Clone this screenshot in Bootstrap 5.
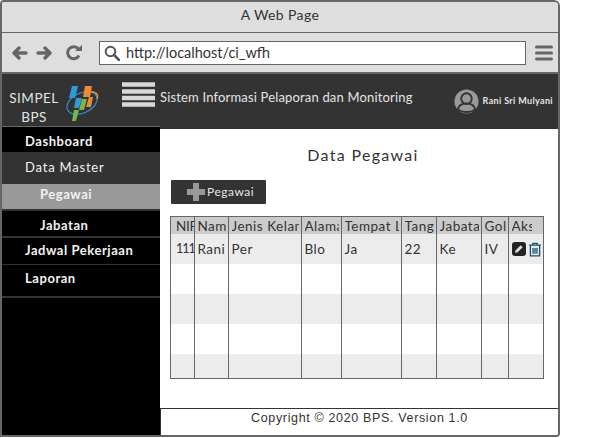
<!DOCTYPE html>
<html lang="en">
<head>
    <meta charset="UTF-8" />
    <meta name="viewport" content="width=device-width, initial-scale=1.0" />
    <title>A Web Page</title>
    <link href="https://cdn.jsdelivr.net/npm/bootstrap@5.3.0/dist/css/bootstrap.min.css" rel="stylesheet">
    <style>
        body { background: #fff; font-family: "Lato", "Liberation Sans", sans-serif; color: #333; overflow: hidden; }
        .browser-win { width: 560px; height: 437px; border: 2px solid #666; border-radius: 4px 6px 4px 0; overflow: hidden; }
        .title-bar { height: 31px; flex: none; background: #dedede; border-bottom: 1px solid #666; font-size: 14px; letter-spacing: .4px; padding-bottom: 5px; }
        .tool-bar { height: 41px; flex: none; background: #dedede; border-bottom: 2px solid #666; padding: 0 0 0 9px; }
        .nav-fwd { margin-left: 8px; }
        .nav-reload { margin-left: 13px; }
        .url-box { width: 427px; height: 24px; background: #fff; border: 1px solid #666; margin: 0 9px 0 17px; font-size: 14.5px; letter-spacing: 0; padding-left: 4px; gap: 6px; }
        .app-head { height: 52px; flex: none; background: #333; color: #e4e4e4; }
        .brand-text { width: 64px; font-size: 13.5px; line-height: 19px; text-align: center; padding-top: 15px; letter-spacing: .5px; }
        .brand-logo { margin-top: 12px; flex: none; }
        .head-menu { margin-left: 22px; height: 41px; }
        .head-title { font-size: 13px; letter-spacing: .17px; margin-left: 5px; margin-top: 7px; white-space: nowrap; }
        .head-user { height: 54px; padding-right: 5px; }
        .user-name { font-size: 9px; font-weight: 700; letter-spacing: .35px; margin-left: 4px; white-space: nowrap; }
        .app-body { height: 309px; }
        .side-menu { width: 158px; background: #000; flex: none; border-top: 1px solid #666; }
        .side-item { display: block; color: #f2f2f2; font-size: 13px; letter-spacing: .55px; text-decoration: none; padding-left: 23px; font-weight: 700; }
        .side-item:hover { color: #f2f2f2; }
        .si-dash { height: 25px; line-height: 29px; }
        .si-master { height: 32px; line-height: 30px; background: #333; font-weight: 400; letter-spacing: .8px; }
        .si-sub { padding-left: 38px; }
        .si-peg { height: 25px; line-height: 21px; background: #999; }
        .si-gap { height: 2px; background: #333; }
        .si-jab { height: 27px; line-height: 29px; border-bottom: 2px solid #333; }
        .si-jad { height: 27px; line-height: 24px; border-bottom: 1px solid #333; }
        .si-lap { height: 33px; line-height: 26px; border-bottom: 2px solid #333; }
        .main-pane { width: 398px; background: #fff; border-top: 3px solid #333; }
        .page-title { font-size: 16px; letter-spacing: 1.3px; text-align: center; margin: 15px 0 0 0; height: 36px; font-weight: 400; line-height: 22px; padding-left: 8px; }
        .add-btn { width: 95px; height: 24px; flex: none; margin-left: 11px; background: #333; color: #e6e6e6; font-size: 12px; letter-spacing: .5px; border: 0; border-radius: 1px; padding: 0 0 0 15px; gap: 1px; }
        .add-btn:hover { background: #333; color: #e6e6e6; }
        .data-wrap { margin: 12px 0 0 10px; width: 374px; height: 163px; flex: none; border: 1px solid #666; overflow: hidden; }
        .data-tbl { width: 372px; table-layout: fixed; border-collapse: collapse; font-size: 13.5px; letter-spacing: .5px; margin: 0; }
        .data-tbl th, .data-tbl td { border-right: 1px solid #666; padding: 1px 2px 0 3px; white-space: nowrap; font-weight: 400; color: #333; }
        .data-tbl th:first-child, .data-tbl td:first-child { padding-left: 5px; padding-right: 0; letter-spacing: -.3px; }
        .data-tbl td:first-child { font-size: 12.5px; letter-spacing: -1px; }
        .data-tbl th:last-child { border-right: 0; padding-right: 11px; }
        .data-tbl td:last-child { border-right: 0; padding: 0 0 0 3px; }
        .data-tbl th { background: #cbcbcb; height: 17px; line-height: 16px; }
        .data-tbl td { height: 30px; background: #fff; }
        .data-tbl tr.shade td { background: #ececec; }
        .cell-clip { overflow: hidden; }
        .act-cell { gap: 2px; }
        .col-a { width: 23px; } .col-b { width: 34px; } .col-c { width: 73px; } .col-d { width: 40px; } .col-e { width: 60px; }
        .col-f { width: 35px; } .col-g { width: 45px; } .col-h { width: 27px; } .col-i { width: 35px; }
        .foot-bar { height: 27px; margin-top: 29px; flex: none; border: 1px solid #333; border-bottom: 0; border-right: 0; font-size: 12.5px; letter-spacing: .65px; text-align: center; line-height: 19px; color: #333; font-family: "Liberation Sans", sans-serif; }
    </style>
</head>
<body>
    <div class="browser-win d-flex flex-column">
        <div class="title-bar d-flex align-items-center justify-content-center">A Web Page</div>

        <div class="tool-bar d-flex align-items-center">
            <svg width="17" height="14" viewBox="0 0 17 14"><path d="M8 2 3 7l5 5M3.500 7H15" fill="none" stroke="#666" stroke-width="3.400" stroke-linejoin="round" stroke-linecap="round"/></svg>
            <svg class="nav-fwd" width="17" height="14" viewBox="0 0 17 14"><path d="M9 2l5 5-5 5M13.500 7H2" fill="none" stroke="#666" stroke-width="3.400" stroke-linejoin="round" stroke-linecap="round"/></svg>
            <svg class="nav-reload" width="16" height="16" viewBox="0 0 16 16"><path d="M13 10.500A6 6 0 1 1 12 3.500" fill="none" stroke="#666" stroke-width="3"/><path d="M9 6h7V0z" fill="#666"/></svg>
            <div class="url-box d-flex align-items-center">
                <svg width="16" height="16" viewBox="0 0 16 16"><circle cx="6.500" cy="6.500" r="4.800" fill="none" stroke="#555" stroke-width="2"/><path d="M10 10l5 5" stroke="#555" stroke-width="2.600" stroke-linecap="round"/></svg>
                <span>http://localhost/ci_wfh</span>
            </div>
            <svg width="18" height="16" viewBox="0 0 18 16"><path d="M1.500 2h15M1.500 8h15M1.500 14h15" stroke="#666" stroke-width="3" stroke-linecap="round"/></svg>
        </div>

        <div class="app-head d-flex">
            <div class="brand-text">SIMPEL<br>BPS</div>
            <svg class="brand-logo" width="34" height="38" viewBox="0 0 34 38">
                <ellipse cx="16" cy="17" rx="16" ry="10" transform="rotate(-25 16 17)" fill="none" stroke="#2f9bd6" stroke-width="1"/>
                <path d="M22 5.500C29 5 33 8 31 13" fill="none" stroke="#e98b3a" stroke-width="1.500"/>
                <path d="M6 0h6L9 12H3z" fill="#2f9bd6"/><path d="M19 0h7l-2 11h-7z" fill="#e98b3a"/>
                <path d="M10 12h6l-3 10H8z" fill="#2f9bd6"/><path d="M23 11h4l-2 10h-5z" fill="#e98b3a"/>
                <path d="M16 13h5l-3 11h-5z" fill="#7ab648"/><path d="M8 24h5l-3 11H6z" fill="#7ab648"/>
            </svg>
            <div class="head-menu d-flex align-items-center">
                <svg width="33" height="25" viewBox="0 0 33 25"><path d="M0 2.500h33M0 9.500h33M0 16h33M0 22.500h33" stroke="#d8d8d8" stroke-width="4.600"/></svg>
                <div class="head-title">Sistem Informasi Pelaporan dan Monitoring</div>
            </div>
            <div class="head-user d-flex align-items-center ms-auto">
                <svg width="25" height="25" viewBox="0 0 26 26"><circle cx="13" cy="13" r="12.500" fill="#999"/><circle cx="13" cy="10" r="5.500" fill="none" stroke="#333" stroke-width="2"/><path d="M4 21c1-4 5-6 9-6s8 2 9 6c-4 4-14 4-18 0z" fill="none" stroke="#333" stroke-width="2"/></svg>
                <span class="user-name">Rani Sri Mulyani</span>
            </div>
        </div>

        <div class="app-body d-flex">
            <nav class="side-menu">
                <a class="side-item si-dash" href="#">Dashboard</a>
                <a class="side-item si-master" href="#">Data Master</a>
                <a class="side-item si-sub si-peg" href="#">Pegawai</a>
                <div class="si-gap"></div>
                <a class="side-item si-sub si-jab" href="#">Jabatan</a>
                <a class="side-item si-jad" href="#">Jadwal Pekerjaan</a>
                <a class="side-item si-lap" href="#">Laporan</a>
            </nav>
            <main class="main-pane d-flex flex-column">
                <h1 class="page-title">Data Pegawai</h1>
                <button class="btn add-btn d-flex align-items-center" type="button">
                    <svg width="20" height="20" viewBox="0 0 20 20"><path d="M10 1v18M1 10h18" stroke="#999" stroke-width="6"/></svg>
                    <span>Pegawai</span>
                </button>
                <div class="data-wrap">
                    <table class="data-tbl">
                        <colgroup>
                            <col class="col-a"><col class="col-b"><col class="col-c"><col class="col-d"><col class="col-e"><col class="col-f"><col class="col-g"><col class="col-h"><col class="col-i">
                        </colgroup>
                        <thead>
                            <tr>
                                <th><div class="cell-clip">NIP</div></th><th><div class="cell-clip">Nama</div></th><th><div class="cell-clip">Jenis Kelamin</div></th>
                                <th><div class="cell-clip">Alamat</div></th><th><div class="cell-clip">Tempat Lahir</div></th><th><div class="cell-clip">Tanggal</div></th>
                                <th><div class="cell-clip">Jabatan</div></th><th><div class="cell-clip">Gol</div></th><th><div class="cell-clip">Aksi</div></th>
                            </tr>
                        </thead>
                        <tbody>
                            <tr class="shade">
                                <td><div class="cell-clip">111</div></td><td><div class="cell-clip">Rani</div></td><td>Per</td><td>Blo</td><td>Ja</td><td>22</td><td>Ke</td><td>IV</td>
                                <td>
                                    <div class="act-cell d-flex align-items-center">
                                        <svg width="14" height="14" viewBox="0 0 14 14"><rect width="14" height="14" rx="3" fill="#222"/><path d="M3 11l.7-2.700 5-5 2 2-5 5z" fill="#ddd"/></svg>
                                        <svg width="14" height="15" viewBox="0 0 13 14"><path d="M1 3h11M4.500 3V1.200h4V3M2.200 3v10h8.600V3M4.700 5.500V11M6.500 5.500V11M8.300 5.500V11" fill="none" stroke="#16506f" stroke-width="1.200"/></svg>
                                    </div>
                                </td>
                            </tr>
                            <tr><td></td><td></td><td></td><td></td><td></td><td></td><td></td><td></td><td></td></tr>
                            <tr class="shade"><td></td><td></td><td></td><td></td><td></td><td></td><td></td><td></td><td></td></tr>
                            <tr><td></td><td></td><td></td><td></td><td></td><td></td><td></td><td></td><td></td></tr>
                            <tr class="shade"><td></td><td></td><td></td><td></td><td></td><td></td><td></td><td></td><td></td></tr>
                        </tbody>
                    </table>
                </div>
                <div class="foot-bar">Copyright © 2020 BPS. Version 1.0</div>
            </main>
        </div>
    </div>
    <script src="https://cdn.jsdelivr.net/npm/bootstrap@5.3.0/dist/js/bootstrap.bundle.min.js"></script>
</body>
</html>
